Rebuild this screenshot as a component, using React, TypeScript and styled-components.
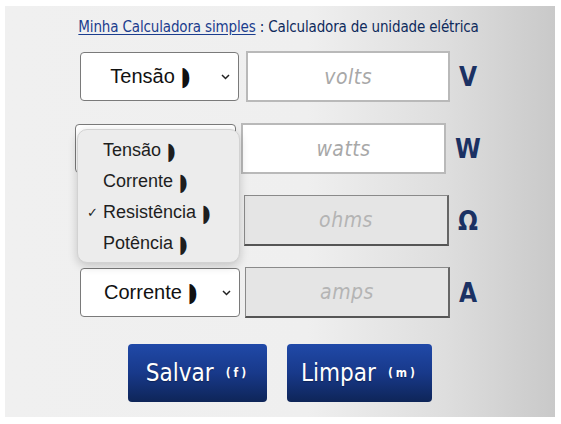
import React from "react";
import styled, { createGlobalStyle } from "styled-components";

const Global = createGlobalStyle`
  html, body { margin: 0; padding: 0; background: #ffffff; }
  body { width: 561px; height: 424px; overflow: hidden; }
`;

const COND = `"DejaVu Sans Condensed", "Liberation Sans Narrow", sans-serif`;
const SANS = `"Liberation Sans", Arial, "DejaVu Sans", sans-serif`;

const Panel = styled.div`
  box-sizing: border-box;
  margin: 6px 0 0 5px;
  width: 550px;
  height: 411px;
  background: linear-gradient(to right, #f0f0f0 0%, #efefef 55%, #dedede 80%, #c9c9c9 100%);
  display: flex;
  flex-direction: column;
  align-items: center;
  padding-top: 11px;
`;

const Title = styled.div`
  font-family: ${COND};
  font-size: 15px;
  letter-spacing: -0.15px;
  line-height: 20px;
  color: #0e2a5c;
  white-space: nowrap;
  height: 20px;
  margin-left: -3px;
`;

const TitleLink = styled.a`
  color: #1b3d8e;
  text-decoration: underline;
  text-underline-offset: 2px;
`;

const Rows = styled.div`
  position: relative;
  align-self: flex-start;
  margin: 14px 0 0 75px;
  display: flex;
  flex-direction: column;
  gap: 21px;
  width: 406px;
`;

const Row = styled.div`
  display: flex;
  align-items: center;
  height: 51px;
`;

const SelectBox = styled.div<{ $ml: number; $w: number }>`
  box-sizing: border-box;
  margin-left: ${(p) => p.$ml}px;
  width: ${(p) => p.$w}px;
  height: 49px;
  background: #ffffff;
  border: 1px solid #7a7a7a;
  border-radius: 4px;
  display: flex;
  align-items: center;
  padding-right: 8px;
`;

const SelectText = styled.span<{ $covered?: boolean }>`
  flex: 1;
  text-align: center;
  font-family: ${SANS};
  font-size: 20px;
  color: #111111;
  white-space: nowrap;
  visibility: ${(p) => (p.$covered ? "hidden" : "visible")};
`;

const Glyph = styled.span`
  display: inline-block;
  font-family: "DejaVu Sans", sans-serif;
  font-size: 1.05em;
  line-height: 1;
  margin-left: 6px;
  transform: scale(0.85, 1.25);
  transform-origin: left center;
`;

const Chevron = () => (
  <svg width="9" height="6" viewBox="0 0 9 6">
    <polyline points="1,1 4.5,4.5 8,1" fill="none" stroke="#222" strokeWidth="1.5" />
  </svg>
);

const Field = styled.div<{ $ml: number; $disabled?: boolean }>`
  box-sizing: border-box;
  margin-left: ${(p) => p.$ml}px;
  width: 205px;
  height: 51px;
  display: flex;
  align-items: center;
  justify-content: center;
  font-family: ${COND};
  font-style: italic;
  font-size: 21px;
  letter-spacing: 0.5px;
  background: ${(p) => (p.$disabled ? "#e5e5e5" : "#ffffff")};
  color: ${(p) => (p.$disabled ? "#b4b4b4" : "#a8a8a8")};
  border-style: solid;
  border-width: ${(p) => (p.$disabled ? "1px 2px 2px 1px" : "2px")};
  border-color: ${(p) =>
    p.$disabled ? "#8a8a8a #666666 #555555 #8a8a8a" : "#b9b9b9"};
`;

const Unit = styled.div`
  margin-left: auto;
  width: 36px;
  text-align: center;
  font-family: ${COND};
  font-weight: bold;
  font-size: 26px;
  color: #1b3163;
`;

const Menu = styled.div`
  position: absolute;
  left: -3px;
  top: 78px;
  box-sizing: border-box;
  width: 163px;
  height: 134px;
  padding: 5px 0;
  background: #ececec;
  border: 1px solid #d2d2d2;
  border-radius: 10px;
  box-shadow: 0 3px 10px rgba(0, 0, 0, 0.18);
`;

const MenuItem = styled.div`
  position: relative;
  height: 31px;
  display: flex;
  align-items: center;
  padding-left: 25px;
  font-family: ${SANS};
  font-size: 18px;
  color: #1e1e1e;
  white-space: nowrap;
`;

const Check = styled.span`
  position: absolute;
  left: 9px;
  font-size: 13px;
  font-family: "DejaVu Sans", sans-serif;
`;

const Buttons = styled.div`
  display: flex;
  gap: 20px;
  margin-top: 26px;
`;

const Button = styled.button<{ $w: number }>`
  width: ${(p) => p.$w}px;
  height: 58px;
  border: none;
  border-radius: 4px;
  background: linear-gradient(to bottom, #2049a8 0%, #18398a 50%, #0e2558 100%);
  color: #ffffff;
  display: flex;
  align-items: center;
  justify-content: center;
  gap: 12px;
  font-family: ${COND};
  font-size: 24px;
  padding: 0;
  text-shadow: 0 1px 1px rgba(0, 0, 0, 0.3);
`;

const Key = styled.span`
  font-size: 12px;
  font-weight: bold;
  letter-spacing: 3px;
`;

const rows = [
  { sel: "Tensão", sml: 0, sw: 160, iml: 7, ph: "volts", unit: "V", dis: false, cov: false },
  { sel: "Corrente", sml: -5, sw: 161, iml: 5, ph: "watts", unit: "W", dis: false, cov: true },
  { sel: "Resistência", sml: -2, sw: 161, iml: 5, ph: "ohms", unit: "Ω", dis: true, cov: true },
  { sel: "Corrente", sml: 0, sw: 160, iml: 5, ph: "amps", unit: "A", dis: true, cov: false },
];

const menu = ["Tensão", "Corrente", "Resistência", "Potência"];

export default function App() {
  return (
    <>
      <Global />
      <Panel>
        <Title>
          <TitleLink>Minha Calculadora simples</TitleLink> : Calculadora de unidade elétrica
        </Title>
        <Rows>
          {rows.map((r, i) => (
            <Row key={i}>
              <SelectBox $ml={r.sml} $w={r.sw}>
                <SelectText $covered={r.cov}>
                  {r.sel}
                  <Glyph>◗</Glyph>
                </SelectText>
                <Chevron />
              </SelectBox>
              <Field $ml={r.iml} $disabled={r.dis}>
                {r.ph}
              </Field>
              <Unit>{r.unit}</Unit>
            </Row>
          ))}
          <Menu>
            {menu.map((m) => (
              <MenuItem key={m}>
                {m === "Resistência" && <Check>✓</Check>}
                {m}
                <Glyph>◗</Glyph>
              </MenuItem>
            ))}
          </Menu>
        </Rows>
        <Buttons>
          <Button $w={139}>
            Salvar <Key>(f)</Key>
          </Button>
          <Button $w={145}>
            Limpar <Key>(m)</Key>
          </Button>
        </Buttons>
      </Panel>
    </>
  );
}
